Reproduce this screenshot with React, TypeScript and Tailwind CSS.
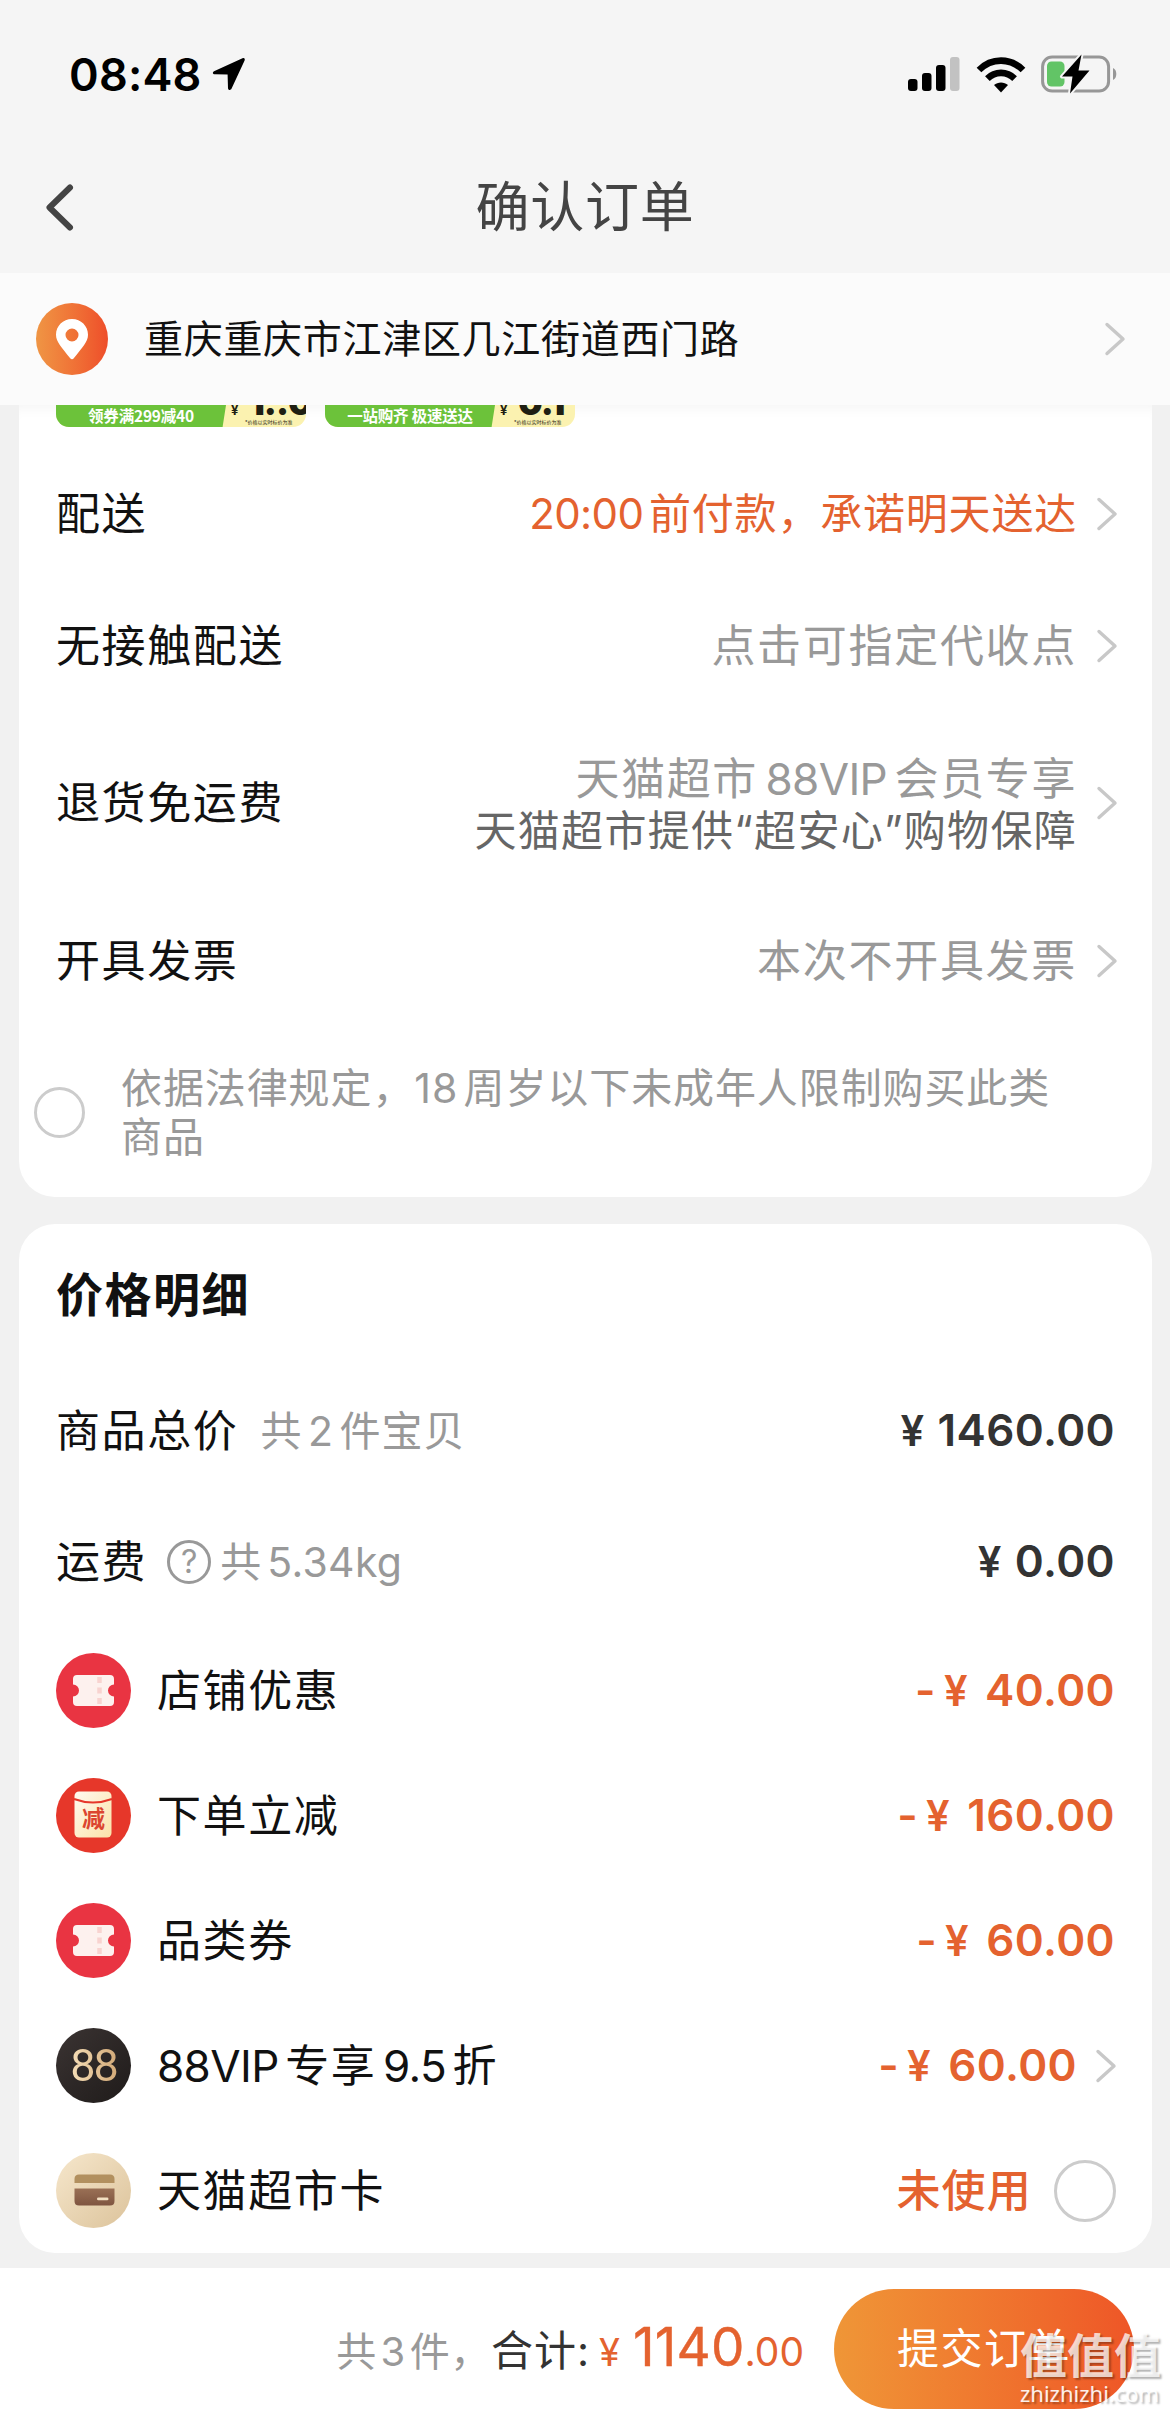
import React from 'react';

interface AmountProps {
  value: string;
  minus?: boolean;
}

interface InfoRowProps {
  label: string;
  height: string;
  children: React.ReactNode;
}

interface Discount {
  id: string;
  label: React.ReactNode;
  icon: React.ReactNode;
  right: React.ReactNode;
}

const Chevron: React.FC<{ className?: string }> = ({ className = '' }) => (
  <svg className={`${className} w-[22px] h-[36px] shrink-0`} viewBox="0 0 22 36" fill="none">
    <path d="M3 3.5L19 18L3 32.5" stroke="#c8c8c8" strokeWidth="3.4" strokeLinecap="round" strokeLinejoin="round" />
  </svg>
);

// Latin run inside Chinese text, set tighter than the characters around it
const Latin: React.FC<{ children: React.ReactNode }> = ({ children }) => (
  <span className="tracking-[-0.6px]">{children}</span>
);

const Amount: React.FC<AmountProps> = ({ value, minus }) => (
  <div className={`flex items-baseline mb-[2px] font-semibold text-[44px] leading-none tracking-[0.4px] ${minus ? 'text-[#e4622f]' : 'text-[#333]'}`}>
    {minus && <span className="mr-[8px]">-</span>}
    <span className={`text-[42px] ${minus ? 'mr-[17px]' : 'mr-[13px]'}`}>¥</span>
    <span>{value}</span>
  </div>
);

const StatusBar: React.FC = () => (
  <div className="flex items-center justify-between h-[148px] pl-[69px] pr-[52px]">
    <div className="flex items-center">
      <span className="text-[45px] font-semibold text-black leading-none tracking-[0.2px]">08:48</span>
      <svg className="ml-[10px] w-[34px] h-[34px]" viewBox="0 0 34 34">
        <path d="M30.5 1.2L2 14.2C0.2 15.2 0.6 17.2 2.8 17.3L15.6 17.6L16 31C16.1 33.4 18.6 33.8 19.6 31.6L32.6 3.4C33.3 1.6 32.2 0.5 30.5 1.2Z" fill="#000" />
      </svg>
    </div>
    <div className="flex items-center">
      <svg className="w-[52px] h-[36px]" viewBox="0 0 52 36">
        <rect x="0" y="23" width="9.5" height="12" rx="3" fill="#000" />
        <rect x="14" y="17" width="9.5" height="18" rx="3" fill="#000" />
        <rect x="28" y="9" width="9.5" height="26" rx="3" fill="#000" />
        <rect x="42" y="1" width="9.5" height="34" rx="3" fill="#c2c2c2" />
      </svg>
      <svg className="ml-[16px] w-[50px] h-[37px]" viewBox="0 0 50 37" fill="none">
        <path d="M3 14C15.5 1.5 34.5 1.5 47 14" stroke="#000" strokeWidth="6.6" />
        <path d="M11.4 22.6C19 15 31 15 38.6 22.6" stroke="#000" strokeWidth="6.6" />
        <path d="M18 29C21.8 25.6 28.2 25.6 32 29L25 36.4Z" fill="#000" />
      </svg>
      <svg className="ml-[14px] w-[78px] h-[42px]" viewBox="0 0 78 42" fill="none">
        <rect x="2.6" y="4" width="66" height="34" rx="9.5" stroke="#979797" strokeWidth="3" />
        <path d="M73 15C77.4 16.5 77.4 25.5 73 27Z" fill="#979797" />
        <rect x="7" y="8.5" width="17.5" height="25" rx="4.5" fill="#62c466" />
        <path d="M41.5 1.5L22 23.5H32.5L30 40.5L49.5 17.5H38.5Z" fill="#000" stroke="#f5f5f5" strokeWidth="4" paintOrder="stroke" strokeLinejoin="round" />
      </svg>
    </div>
  </div>
);

const NavBar: React.FC = () => (
  <div className="grid grid-cols-3 items-center h-[125px] pb-[6px]">
    <svg className="ml-[42px] w-[34px] h-[52px]" viewBox="0 0 34 52" fill="none">
      <path d="M28 5.5L7.5 25.5L28 45.5" stroke="#444" strokeWidth="6" strokeLinecap="round" strokeLinejoin="round" />
    </svg>
    <h1 className="text-center text-[54px] leading-none tracking-[0.8px] text-[#444] whitespace-nowrap">确认订单</h1>
  </div>
);

const AddressBar: React.FC = () => (
  <div className="flex items-center h-[132px] bg-[#fbfbfb] pl-[36px] pr-[44px] pb-px">
    <div className="flex items-center justify-center w-[72px] h-[72px] rounded-full bg-gradient-to-r from-[#ef9544] to-[#ee4d2a]">
      <svg className="w-[34px] h-[42px]" viewBox="0 0 34 42">
        <path fillRule="evenodd" d="M17 1C8 1 1 8 1 16.8C1 24 7 30 15 40Q17 42.5 19 40C27 30 33 24 33 16.8C33 8 26 1 17 1ZM17 10.5A6.5 6.5 0 1 1 17 23.5A6.5 6.5 0 1 1 17 10.5Z" fill="#fff" />
      </svg>
    </div>
    <span className="ml-[36px] flex-1 text-[39px] leading-none tracking-[0.7px] text-[#111]">重庆重庆市江津区几江街道西门路</span>
    <Chevron />
  </div>
);

const PromoTag: React.FC<{ text: string; price: string }> = ({ text, price }) => (
  <div className="flex w-[250px] h-[22px] rounded-b-[13px] bg-[#fbf2b0] overflow-hidden">
    <div className="flex items-center justify-center w-[170px] h-full bg-[#6cc23a] text-white font-bold font-['Noto_Sans_CJK_SC'] text-[15.5px] tracking-[-0.2px] leading-none whitespace-nowrap [clip-path:polygon(0_0,100%_0,98%_100%,0_100%)]">
      {text}
    </div>
    <div className="flex flex-1 text-[#1f1f12] whitespace-nowrap">
      <span className="ml-[5px] w-[14px] mt-[-1px] text-[13px] leading-none font-bold">¥</span>
      <div className="flex flex-col w-[54px] mt-[-19px]">
        <span className="pl-[4px] text-[35px] leading-[33px] tracking-[-1px] font-black">{price}</span>
        <span className="text-[5px] leading-[7px]">*价格以实时标价为准</span>
      </div>
    </div>
  </div>
);

const InfoRow: React.FC<InfoRowProps> = ({ label, height, children }) => (
  <div className={`flex items-center justify-between pl-[37px] pr-[34px] ${height}`}>
    <span className="text-[44px] leading-none tracking-[1.6px] text-[#111]">{label}</span>
    <div className="flex items-center">
      {children}
      <Chevron className="ml-[19px]" />
    </div>
  </div>
);

const TicketIcon: React.FC = () => (
  <svg className="w-[75px] h-[75px]" viewBox="0 0 75 75">
    <circle cx="37.5" cy="37.5" r="37.5" fill="#e93442" />
    <path d="M21 22H54Q58 22 58 26V31.5A6 6 0 0 0 58 43.5V49Q58 53 54 53H21Q17 53 17 49V43.5A6 6 0 0 0 17 31.5V26Q17 22 21 22Z" fill="#fdf1ee" />
    <path d="M43.5 24V51" stroke="#f8d3d0" strokeWidth="4.5" strokeDasharray="6 4.5" />
  </svg>
);

const EnvelopeIcon: React.FC = () => (
  <div className="relative flex justify-center w-[75px] h-[75px]">
    <svg className="w-[75px] h-[75px]" viewBox="0 0 75 75">
      <defs>
        <linearGradient id="envelope" x1="0" y1="0" x2="1" y2="1">
          <stop offset="0" stopColor="#fffaf0" />
          <stop offset="1" stopColor="#fbe2a8" />
        </linearGradient>
      </defs>
      <circle cx="37.5" cy="37.5" r="37.5" fill="#e6372a" />
      <rect x="18.5" y="13.5" width="37" height="46" rx="4.5" fill="url(#envelope)" />
      <path d="M18 21Q37 28 56 21" stroke="#e6372a" strokeWidth="2" fill="none" />
    </svg>
    <span className="absolute top-[30px] text-[23px] leading-none font-bold text-[#dc4530]">减</span>
  </div>
);

const VipIcon: React.FC = () => (
  <div className="flex items-center justify-center w-[75px] h-[75px] rounded-full bg-gradient-to-br from-[#3b3433] to-[#1f1b1a]">
    <span className="font-['Roboto'] text-[45px] leading-none tracking-[-2px] bg-gradient-to-r from-[#f6dfb8] to-[#d3aa78] bg-clip-text text-transparent">88</span>
  </div>
);

const CardIcon: React.FC = () => (
  <svg className="w-[75px] h-[75px]" viewBox="0 0 75 75">
    <defs>
      <linearGradient id="cardBg" x1="0" y1="0" x2="1" y2="1">
        <stop offset="0" stopColor="#f6e7cc" />
        <stop offset="1" stopColor="#dcc39b" />
      </linearGradient>
      <linearGradient id="cardBottom" x1="0" y1="0" x2="0" y2="1">
        <stop offset="0" stopColor="#9a7055" />
        <stop offset="1" stopColor="#7f5540" />
      </linearGradient>
    </defs>
    <circle cx="37.5" cy="37.5" r="37.5" fill="url(#cardBg)" />
    <path d="M18.5 30V26Q18.5 21.5 23 21.5H54Q58.5 21.5 58.5 26V30Z" fill="#b2905f" />
    <path d="M18.5 35.5H58.5V48Q58.5 52.5 54 52.5H23Q18.5 52.5 18.5 48Z" fill="url(#cardBottom)" />
    <rect x="41" y="44.5" width="11.5" height="2.8" rx="1.4" fill="#f3e0c2" />
  </svg>
);

const discounts: Discount[] = [
  { id: 'shop', label: '店铺优惠', icon: <TicketIcon />, right: <Amount minus value="40.00" /> },
  { id: 'order', label: '下单立减', icon: <EnvelopeIcon />, right: <Amount minus value="160.00" /> },
  { id: 'category', label: '品类券', icon: <TicketIcon />, right: <Amount minus value="60.00" /> },
  {
    id: 'vip',
    label: (
      <>
        <Latin>88VIP</Latin> 专享 <Latin>9.5</Latin> 折
      </>
    ),
    icon: <VipIcon />,
    right: (
      <>
        <Amount minus value="60.00" />
        <Chevron className="ml-[18px] mr-[-2px]" />
      </>
    ),
  },
  {
    id: 'card',
    label: '天猫超市卡',
    icon: <CardIcon />,
    right: (
      <>
        <span className="text-[44px] leading-none font-medium tracking-[1.2px] text-[#e4622f]">未使用</span>
        <span className="ml-[22px] mr-[-1px] w-[62px] h-[62px] rounded-full border-[3px] border-[#ccc]" />
      </>
    ),
  },
];

const DeliveryCard: React.FC = () => (
  <section className="ml-[19px] mr-[18px] h-[792px] bg-white rounded-b-[36px] shadow-[inset_0_12px_14px_-10px_rgba(0,0,0,0.05)]">
    <div className="flex gap-[19px] h-[43px] pl-[37px]">
      <PromoTag text="领券满299减40" price="1::0" />
      <PromoTag text="一站购齐 极速送达" price="0.1" />
    </div>
    <InfoRow label="配送" height="h-[132px]">
      <span className="text-[42px] leading-none tracking-[0.8px] [word-spacing:-7px] text-[#e4622f]">
        <Latin>20:00</Latin> 前付款，承诺明天送达
      </span>
    </InfoRow>
    <InfoRow label="无接触配送" height="h-[132px]">
      <span className="text-[44px] leading-none tracking-[1.7px] text-[#999]">点击可指定代收点</span>
    </InfoRow>
    <InfoRow label="退货免运费" height="h-[182px]">
      <div className="text-right leading-[52px] pt-[3px]">
        <p className="text-[44px] tracking-[1.6px] [word-spacing:-6.5px] text-[#999]">
          天猫超市 <Latin>88VIP</Latin> 会员专享
        </p>
        <p className="text-[42px] tracking-[1.3px] text-[#666]">天猫超市提供“超安心”购物保障</p>
      </div>
    </InfoRow>
    <InfoRow label="开具发票" height="h-[134px]">
      <span className="text-[44px] leading-none tracking-[1.7px] text-[#999]">本次不开具发票</span>
    </InfoRow>
    <div className="flex items-center h-[168px] pl-[15px] pt-px">
      <span className="w-[51px] h-[51px] shrink-0 rounded-full border-[3px] border-[#ccc]" />
      <p className="ml-[36px] text-[41px] leading-[49px] tracking-[0.9px] [word-spacing:-7px] text-[#999] whitespace-nowrap">
        依据法律规定，18 周岁以下未成年人限制购买此类
        <br />
        商品
      </p>
    </div>
  </section>
);

const PriceCard: React.FC = () => (
  <section className="ml-[19px] mr-[18px] mt-[27px] h-[1029px] bg-white rounded-[36px] pl-[37px] pr-[37px]">
    <h2 className="flex items-center h-[142px] text-[47px] font-bold tracking-[1.5px] text-[#111]">价格明细</h2>
    <div className="flex items-center justify-between h-[130px]">
      <div className="flex items-center leading-none">
        <span className="text-[44px] tracking-[1.6px] text-[#111]">商品总价</span>
        <span className="ml-[22px] text-[41px] tracking-[1px] [word-spacing:-7px] text-[#999]">共 2 件宝贝</span>
      </div>
      <Amount value="1460.00" />
    </div>
    <div className="flex items-center justify-between h-[132px]">
      <div className="flex items-center leading-none">
        <span className="text-[44px] tracking-[1.6px] text-[#111]">运费</span>
        <span className="ml-[20px] mr-[9px] flex items-center justify-center w-[44px] h-[44px] rounded-full border-[3px] border-[#999] text-[32px] text-[#999]">?</span>
        <span className="text-[41px] tracking-[0.3px] [word-spacing:-6px] text-[#999]">共 5.34kg</span>
      </div>
      <Amount value="0.00" />
    </div>
    {discounts.map((item) => (
      <div key={item.id} className="flex items-center h-[125px]">
        {item.icon}
        <span className="ml-[26px] flex-1 text-[44px] leading-none tracking-[1.6px] [word-spacing:-7.5px] text-[#111]">{item.label}</span>
        <div className="flex items-center">{item.right}</div>
      </div>
    ))}
  </section>
);

const SubmitBar: React.FC = () => (
  <footer className="relative flex justify-end mt-[15px] h-[143px] bg-white pt-[21px] pr-[36px]">
    <div className="flex items-baseline mr-[30px] pt-[31px] leading-[54px] whitespace-nowrap">
      <span className="text-[40px] tracking-[0.6px] [word-spacing:-8px] text-[#999]">共 3 件，</span>
      <span className="text-[42px] tracking-[1px] text-[#333]">合计:</span>
      <span className="ml-[9px] mr-[13px] text-[38px] text-[#e4622f]">¥</span>
      <span className="text-[53px] tracking-[0.2px] text-[#e4622f] [-webkit-text-stroke:0.4px_#e4622f]">1140</span>
      <span className="text-[39px] text-[#e4622f]">.00</span>
    </div>
    <button className="w-[300px] h-[120px] rounded-full bg-gradient-to-r from-[#ef9637] to-[#ee5527] text-[42px] leading-none tracking-[1.5px] text-white">
      提交订单
    </button>
    <div className="absolute right-[8px] bottom-[6px] w-[142px] text-white/75 [text-shadow:2px_2px_2px_rgba(0,0,0,0.3)]">
      <p className="text-[47px] leading-[50px] font-bold whitespace-nowrap">值值值</p>
      <p className="font-['Noto_Sans'] text-[22px] leading-[24px] text-white/90 whitespace-nowrap">zhizhizhi.com</p>
    </div>
  </footer>
);

const App: React.FC = () => (
  <div className="w-[1170px] h-[2411px] overflow-hidden bg-[#f1f1f1] font-['Inter','Noto_Sans_CJK_SC',sans-serif]">
    <header className="bg-[#f5f5f5]">
      <StatusBar />
      <NavBar />
      <AddressBar />
    </header>
    <DeliveryCard />
    <PriceCard />
    <SubmitBar />
  </div>
);

export default App;
